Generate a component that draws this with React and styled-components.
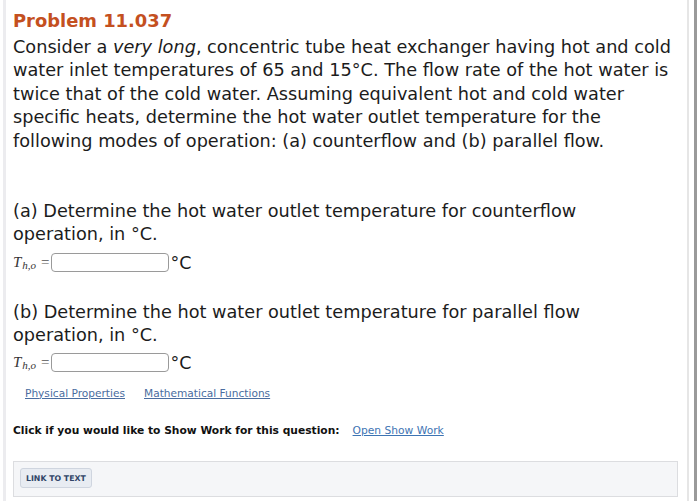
import styled, { createGlobalStyle } from 'styled-components';

const Global = createGlobalStyle`
    html, body {
        margin: 0;
        padding: 0;
        background: #ffffff;
    }
    body {
        font-family: "DejaVu Sans", Verdana, sans-serif;
        color: #1a1a1a;
    }
`

const Frame = styled.div`
    display: flex;
    width: 700px;
    height: 501px;
    overflow: hidden;
    background: #fff;
`

const LeftRule = styled.div`
    width: 3px;
    margin-left: 3px;
    background: #ececef;
    flex-shrink: 0;
`

const Page = styled.div`
    flex: 1;
    padding: 10px 0 0 7px;
`

const RightRail = styled.div`
    display: flex;
    flex-shrink: 0;
    width: 15px;
    .light{
        width: 2px;
        margin-left: 2px;
        background: #e6e6e6;
    }
    .dark{
        width: 3px;
        margin-left: 5px;
        background: #9a9a9a;
    }
`

const Title = styled.h1`
    margin: 0 0 4px 0;
    font-size: 17.9px;
    font-weight: bold;
    color: #c4501f;
    line-height: 22px;
`

const Text = styled.p`
    margin: ${props => props.mt || 0}px 0 0 0;
    font-size: 17.7px;
    line-height: 23.4px;
    color: #1c1c1c;
    white-space: nowrap;
    em{
        font-style: italic;
    }
`

const AnswerRow = styled.div`
    display: flex;
    align-items: center;
    height: 22px;
    margin-top: ${props => props.mt || 0}px;
`

const Symbol = styled.span`
    font-family: "Liberation Serif", "Times New Roman", serif;
    font-style: italic;
    font-size: 15px;
    color: #333;
    sub{
        font-size: 11px;
        vertical-align: -2px;
        margin-left: 1px;
    }
`

const Equals = styled.span`
    font-family: "Liberation Serif", serif;
    font-size: 15px;
    color: #555;
    margin-left: 5px;
`

const Input = styled.div`
    width: 116px;
    height: 17px;
    margin-left: 1px;
    border: 1px solid #9a9a9a;
    border-radius: 4px;
    background: #fff;
`

const Unit = styled.span`
    font-size: 17.5px;
    margin-left: 2px;
`

const Links = styled.div`
    display: flex;
    gap: 19px;
    margin: 13px 0 0 12px;
    a{
        font-size: 10.6px;
        color: #4a6da0;
        text-decoration: underline;
    }
`

const ShowWork = styled.div`
    display: flex;
    align-items: center;
    margin-top: 25px;
    font-size: 10.7px;
    b{
        color: #111;
    }
    a{
        margin-left: 13px;
        color: #3d74b3;
        text-decoration: underline;
    }
`

const LinkBox = styled.div`
    margin: 24px 0 0 0;
    width: 665px;
    height: 36px;
    box-sizing: border-box;
    border: 1px solid #dcdde0;
    background: #f5f6f8;
    padding: 4px 0 0 6px;
`

const LinkButton = styled.div`
    display: inline-block;
    padding: 5px 5px 4px;
    font-size: 7.8px;
    font-weight: bold;
    color: #2f4467;
    background: #e8ecf2;
    border: 1px solid #cfd5df;
    border-radius: 3px;
`

const App = () => {
    return (
        <Frame>
            <Global />
            <LeftRule />
            <Page>
                <Title>Problem 11.037</Title>
                <Text>
                    Consider a <em>very long</em>, concentric tube heat exchanger having hot and cold
                    <br />water inlet temperatures of 65 and 15°C. The flow rate of the hot water is
                    <br />twice that of the cold water. Assuming equivalent hot and cold water
                    <br />specific heats, determine the hot water outlet temperature for the
                    <br />following modes of operation: (a) counterflow and (b) parallel flow.
                </Text>

                <Text mt={47}>
                    (a) Determine the hot water outlet temperature for counterflow
                    <br />operation, in °C.
                </Text>
                <AnswerRow mt={5}>
                    <Symbol>T<sub>h,o</sub></Symbol>
                    <Equals>=</Equals>
                    <Input />
                    <Unit>°C</Unit>
                </AnswerRow>

                <Text mt={27}>
                    (b) Determine the hot water outlet temperature for parallel flow
                    <br />operation, in °C.
                </Text>
                <AnswerRow mt={4}>
                    <Symbol>T<sub>h,o</sub></Symbol>
                    <Equals>=</Equals>
                    <Input />
                    <Unit>°C</Unit>
                </AnswerRow>

                <Links>
                    <a>Physical Properties</a>
                    <a>Mathematical Functions</a>
                </Links>

                <ShowWork>
                    <b>Click if you would like to Show Work for this question:</b>
                    <a>Open Show Work</a>
                </ShowWork>

                <LinkBox>
                    <LinkButton>LINK TO TEXT</LinkButton>
                </LinkBox>
            </Page>
            <RightRail>
                <div className="light" />
                <div className="dark" />
            </RightRail>
        </Frame>
    );
}

export default App;
